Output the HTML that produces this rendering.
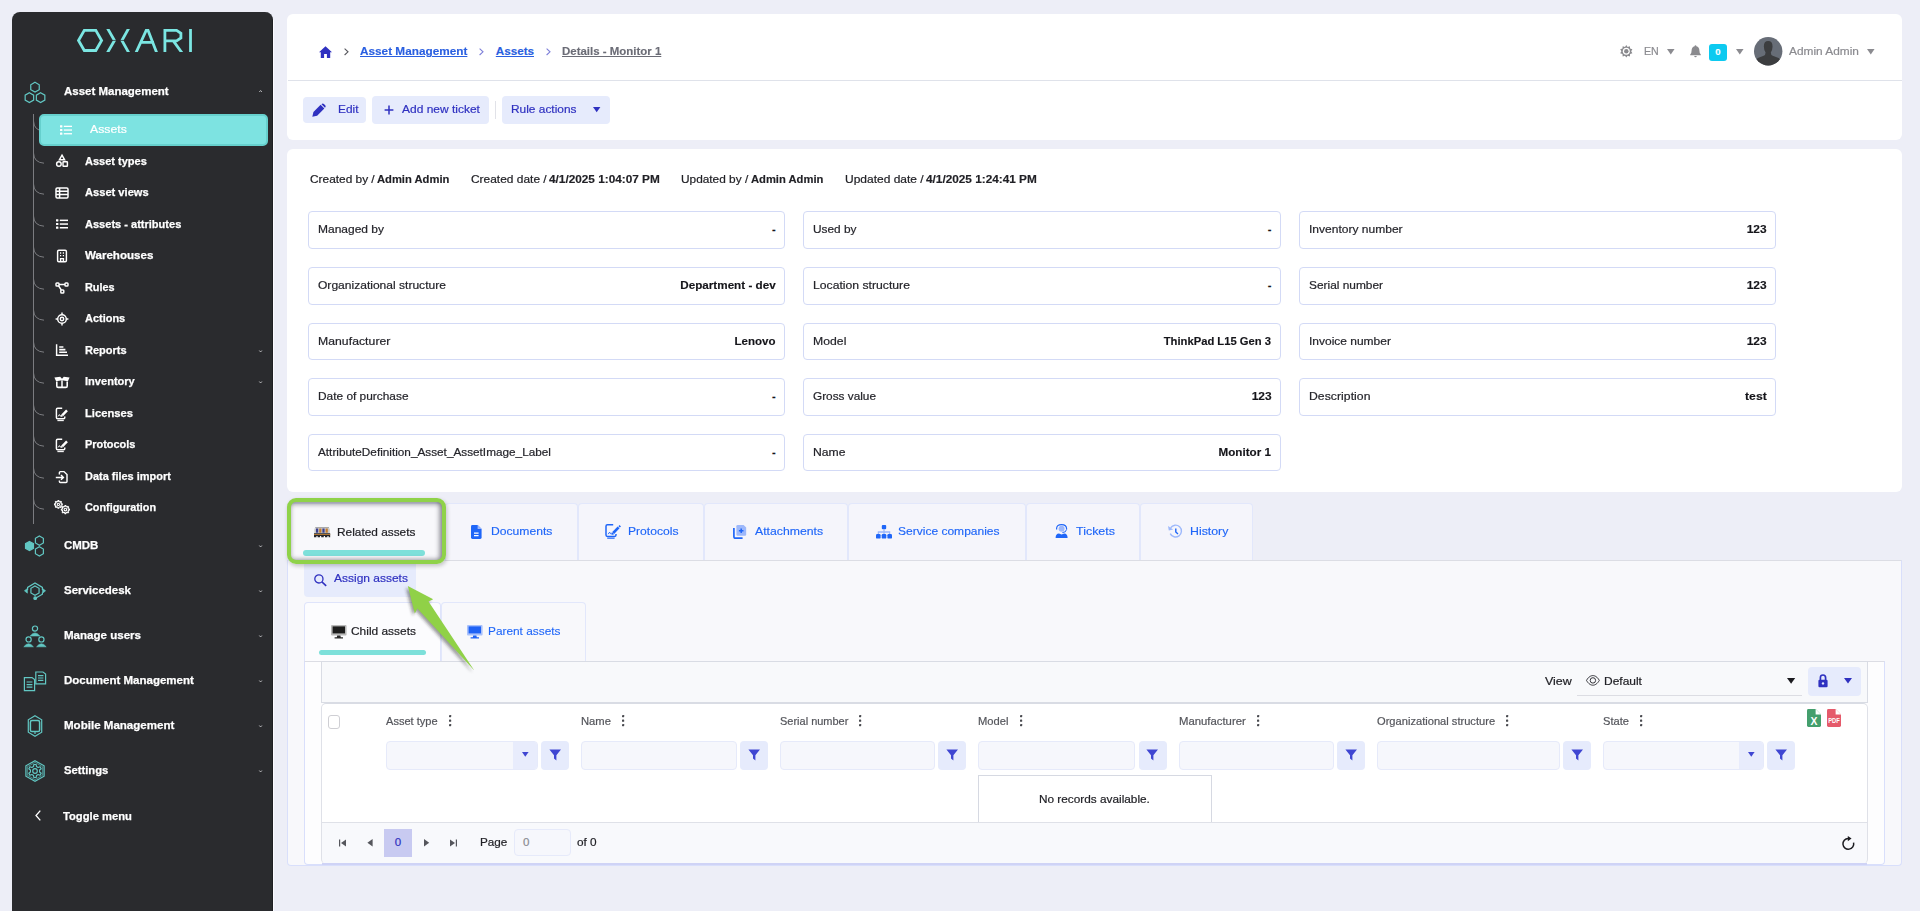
<!DOCTYPE html>
<html lang="en">
<head>
<meta charset="utf-8">
<title>Details - Monitor 1</title>
<style>
*{box-sizing:border-box;margin:0;padding:0}
html,body{width:1920px;height:911px;overflow:hidden}
body{background:#edeef7;font-family:"Liberation Sans",sans-serif;font-size:12px;color:#1f1f24;position:relative}
.abs{position:absolute}
svg{overflow:visible}
.t{position:absolute;white-space:nowrap;line-height:16px;height:16px;color:#212126}
.card{background:#fff;border-radius:6px}
.fld{border:1px solid #d3daf6;border-radius:4px;background:#fff}
.btn{background:#e6ebfc;border-radius:4px}
.tab{background:#f5f5fb;border:1px solid #e2e7fb;border-bottom:0;border-radius:4px 4px 0 0}
.fin{background:#f6f7fc;border:1px solid #e6eafa;border-radius:4px}
.fbt{background:#e6ebfc;border-radius:4px}
</style>
</head>
<body>

<!-- SIDEBAR -->
<div class="abs " style="left:273px;top:20px;width:1px;height:891px;background:#fbfbff"></div>
<div class="abs " style="left:12px;top:12px;width:261px;height:899px;background:#2a2b2e;border-radius:8px 8px 0 0;border-right:1px solid #1f2023"></div>
<svg class="abs" style="left:77px;top:28px;" width="117" height="25" viewBox="0 0 117 25" fill="none" stroke="#7be6e2" stroke-width="2.8"><defs><clipPath id="lgc"><rect x="-1" y="1" width="119" height="22.9"/></clipPath></defs><g clip-path="url(#lgc)"><polygon points="1.5,12.45 7.3,2.4 18.8,2.4 24.6,12.45 18.8,22.5 7.3,22.5"/>
<path d="M30.1 -0.4 L37.5 12.45 L30.1 25.3 M52.1 -0.4 L44.9 12.45 L52.1 25.3"/>
<path d="M58.4 26 L70.2 0.2 L80.2 26 M63 14.4 H77"/>
<path d="M87.9 25 V2.4 H99.6 L103.9 5.3 V10 L99.6 12.95 H87.9 M96.3 12.95 L105.4 25.4"/>
<path d="M113.5 0 V25"/><path d="M35 12.45 H40 M42.4 12.45 H47.4" stroke="#2a2b2e" stroke-width="0.7"/></g></svg>
<div class="abs " style="left:33px;top:114px;width:1px;height:410px;background:#7b7c80"></div>
<svg class="abs" style="left:33px;top:121.3px;" width="12" height="11" viewBox="0 0 12 11" fill="none" stroke="#7b7c80" stroke-width="1"><path d="M0.5 0 Q0.8 9.5 11 10.2"/></svg>
<svg class="abs" style="left:33px;top:152.5px;" width="12" height="11" viewBox="0 0 12 11" fill="none" stroke="#7b7c80" stroke-width="1"><path d="M0.5 0 Q0.8 9.5 11 10.2"/></svg>
<svg class="abs" style="left:33px;top:184px;" width="12" height="11" viewBox="0 0 12 11" fill="none" stroke="#7b7c80" stroke-width="1"><path d="M0.5 0 Q0.8 9.5 11 10.2"/></svg>
<svg class="abs" style="left:33px;top:215.5px;" width="12" height="11" viewBox="0 0 12 11" fill="none" stroke="#7b7c80" stroke-width="1"><path d="M0.5 0 Q0.8 9.5 11 10.2"/></svg>
<svg class="abs" style="left:33px;top:247px;" width="12" height="11" viewBox="0 0 12 11" fill="none" stroke="#7b7c80" stroke-width="1"><path d="M0.5 0 Q0.8 9.5 11 10.2"/></svg>
<svg class="abs" style="left:33px;top:278.5px;" width="12" height="11" viewBox="0 0 12 11" fill="none" stroke="#7b7c80" stroke-width="1"><path d="M0.5 0 Q0.8 9.5 11 10.2"/></svg>
<svg class="abs" style="left:33px;top:310px;" width="12" height="11" viewBox="0 0 12 11" fill="none" stroke="#7b7c80" stroke-width="1"><path d="M0.5 0 Q0.8 9.5 11 10.2"/></svg>
<svg class="abs" style="left:33px;top:341.5px;" width="12" height="11" viewBox="0 0 12 11" fill="none" stroke="#7b7c80" stroke-width="1"><path d="M0.5 0 Q0.8 9.5 11 10.2"/></svg>
<svg class="abs" style="left:33px;top:373px;" width="12" height="11" viewBox="0 0 12 11" fill="none" stroke="#7b7c80" stroke-width="1"><path d="M0.5 0 Q0.8 9.5 11 10.2"/></svg>
<svg class="abs" style="left:33px;top:404.5px;" width="12" height="11" viewBox="0 0 12 11" fill="none" stroke="#7b7c80" stroke-width="1"><path d="M0.5 0 Q0.8 9.5 11 10.2"/></svg>
<svg class="abs" style="left:33px;top:436px;" width="12" height="11" viewBox="0 0 12 11" fill="none" stroke="#7b7c80" stroke-width="1"><path d="M0.5 0 Q0.8 9.5 11 10.2"/></svg>
<svg class="abs" style="left:33px;top:467.5px;" width="12" height="11" viewBox="0 0 12 11" fill="none" stroke="#7b7c80" stroke-width="1"><path d="M0.5 0 Q0.8 9.5 11 10.2"/></svg>
<svg class="abs" style="left:33px;top:499px;" width="12" height="11" viewBox="0 0 12 11" fill="none" stroke="#7b7c80" stroke-width="1"><path d="M0.5 0 Q0.8 9.5 11 10.2"/></svg>
<div class="abs " style="left:39px;top:114px;width:229px;height:32px;background:#7de3e1;border:2px solid #66d0cd;border-radius:5px"></div>
<span class="t" style="top:121.36px;font-size:11.84px;left:89.70px;color:#fff;transform:scaleX(1.036);transform-origin:0 50%;-webkit-text-stroke:0.2px;">Assets</span>
<span class="t" style="top:152.62px;font-size:11.65px;left:85.00px;font-weight:bold;color:#fff;transform:scaleX(0.946);transform-origin:0 50%;-webkit-text-stroke:0.25px;">Asset types</span>
<span class="t" style="top:184.12px;font-size:11.65px;left:85.00px;font-weight:bold;color:#fff;transform:scaleX(0.955);transform-origin:0 50%;-webkit-text-stroke:0.25px;">Asset views</span>
<span class="t" style="top:215.62px;font-size:11.65px;left:85.00px;font-weight:bold;color:#fff;transform:scaleX(0.948);transform-origin:0 50%;-webkit-text-stroke:0.25px;">Assets - attributes</span>
<span class="t" style="top:247.12px;font-size:11.65px;left:85.00px;font-weight:bold;color:#fff;transform:scaleX(0.994);transform-origin:0 50%;-webkit-text-stroke:0.25px;">Warehouses</span>
<span class="t" style="top:278.62px;font-size:11.65px;left:85.00px;font-weight:bold;color:#fff;transform:scaleX(0.933);transform-origin:0 50%;-webkit-text-stroke:0.25px;">Rules</span>
<span class="t" style="top:310.12px;font-size:11.65px;left:85.00px;font-weight:bold;color:#fff;transform:scaleX(0.941);transform-origin:0 50%;-webkit-text-stroke:0.25px;">Actions</span>
<span class="t" style="top:341.62px;font-size:11.65px;left:85.00px;font-weight:bold;color:#fff;transform:scaleX(0.947);transform-origin:0 50%;-webkit-text-stroke:0.25px;">Reports</span>
<span class="t" style="top:373.12px;font-size:11.65px;left:85.00px;font-weight:bold;color:#fff;transform:scaleX(0.950);transform-origin:0 50%;-webkit-text-stroke:0.25px;">Inventory</span>
<span class="t" style="top:404.62px;font-size:11.65px;left:85.00px;font-weight:bold;color:#fff;transform:scaleX(0.965);transform-origin:0 50%;-webkit-text-stroke:0.25px;">Licenses</span>
<span class="t" style="top:436.12px;font-size:11.65px;left:85.00px;font-weight:bold;color:#fff;transform:scaleX(0.938);transform-origin:0 50%;-webkit-text-stroke:0.25px;">Protocols</span>
<span class="t" style="top:467.62px;font-size:11.65px;left:85.00px;font-weight:bold;color:#fff;transform:scaleX(0.941);transform-origin:0 50%;-webkit-text-stroke:0.25px;">Data files import</span>
<span class="t" style="top:499.12px;font-size:11.65px;left:85.00px;font-weight:bold;color:#fff;transform:scaleX(0.931);transform-origin:0 50%;-webkit-text-stroke:0.25px;">Configuration</span>
<span class="t" style="top:83.12px;font-size:11.65px;left:64.10px;font-weight:bold;color:#fff;transform:scaleX(0.986);transform-origin:0 50%;-webkit-text-stroke:0.25px;">Asset Management</span>
<span class="t" style="top:537.12px;font-size:11.65px;left:64.10px;font-weight:bold;color:#fff;transform:scaleX(0.984);transform-origin:0 50%;-webkit-text-stroke:0.25px;">CMDB</span>
<span class="t" style="top:582.12px;font-size:11.65px;left:64.10px;font-weight:bold;color:#fff;transform:scaleX(0.985);transform-origin:0 50%;-webkit-text-stroke:0.25px;">Servicedesk</span>
<span class="t" style="top:627.12px;font-size:11.65px;left:64.10px;font-weight:bold;color:#fff;transform:scaleX(0.992);transform-origin:0 50%;-webkit-text-stroke:0.25px;">Manage users</span>
<span class="t" style="top:672.12px;font-size:11.65px;left:64.10px;font-weight:bold;color:#fff;transform:scaleX(0.989);transform-origin:0 50%;-webkit-text-stroke:0.25px;">Document Management</span>
<span class="t" style="top:716.92px;font-size:11.65px;left:64.10px;font-weight:bold;color:#fff;transform:scaleX(0.992);transform-origin:0 50%;-webkit-text-stroke:0.25px;">Mobile Management</span>
<span class="t" style="top:762.12px;font-size:11.65px;left:64.10px;font-weight:bold;color:#fff;transform:scaleX(0.966);transform-origin:0 50%;-webkit-text-stroke:0.25px;">Settings</span>
<span class="t" style="top:807.82px;font-size:11.65px;left:62.60px;font-weight:bold;color:#fff;transform:scaleX(0.962);transform-origin:0 50%;-webkit-text-stroke:0.25px;">Toggle menu</span>
<svg class="abs" style="left:258.9px;top:90.3px;" width="3.2" height="2.5" viewBox="0 0 3.2 2.5" fill="none" stroke="#d8d8da" stroke-width="0.8"><path d="M0.3 2 L1.6 0.5 L2.9 2"/></svg>
<svg class="abs" style="left:259.1px;top:349.9px;" width="3.2" height="2.5" viewBox="0 0 3.2 2.5" fill="none" stroke="#d8d8da" stroke-width="0.8"><path d="M0.3 0.5 L1.6 2 L2.9 0.5"/></svg>
<svg class="abs" style="left:259.1px;top:381.4px;" width="3.2" height="2.5" viewBox="0 0 3.2 2.5" fill="none" stroke="#d8d8da" stroke-width="0.8"><path d="M0.3 0.5 L1.6 2 L2.9 0.5"/></svg>
<svg class="abs" style="left:259.1px;top:544.9px;" width="3.2" height="2.5" viewBox="0 0 3.2 2.5" fill="none" stroke="#d8d8da" stroke-width="0.8"><path d="M0.3 0.5 L1.6 2 L2.9 0.5"/></svg>
<svg class="abs" style="left:259.1px;top:589.9px;" width="3.2" height="2.5" viewBox="0 0 3.2 2.5" fill="none" stroke="#d8d8da" stroke-width="0.8"><path d="M0.3 0.5 L1.6 2 L2.9 0.5"/></svg>
<svg class="abs" style="left:259.1px;top:634.9px;" width="3.2" height="2.5" viewBox="0 0 3.2 2.5" fill="none" stroke="#d8d8da" stroke-width="0.8"><path d="M0.3 0.5 L1.6 2 L2.9 0.5"/></svg>
<svg class="abs" style="left:259.1px;top:679.9px;" width="3.2" height="2.5" viewBox="0 0 3.2 2.5" fill="none" stroke="#d8d8da" stroke-width="0.8"><path d="M0.3 0.5 L1.6 2 L2.9 0.5"/></svg>
<svg class="abs" style="left:259.1px;top:724.9px;" width="3.2" height="2.5" viewBox="0 0 3.2 2.5" fill="none" stroke="#d8d8da" stroke-width="0.8"><path d="M0.3 0.5 L1.6 2 L2.9 0.5"/></svg>
<svg class="abs" style="left:259.1px;top:769.9px;" width="3.2" height="2.5" viewBox="0 0 3.2 2.5" fill="none" stroke="#d8d8da" stroke-width="0.8"><path d="M0.3 0.5 L1.6 2 L2.9 0.5"/></svg>
<svg class="abs" style="left:34.5px;top:810px;" width="6" height="11" viewBox="0 0 6 11" fill="none" stroke="#fff" stroke-width="1.3"><path d="M5.3 0.6 L1 5.5 L5.3 10.4"/></svg>
<svg class="abs" style="left:59px;top:122.8px;" width="14" height="14" viewBox="0 0 14 14" fill="#fff"><rect x="1" y="2.2" width="2.4" height="2.2" rx=".4"/><rect x="1" y="5.9" width="2.4" height="2.2" rx=".4"/><rect x="1" y="9.6" width="2.4" height="2.2" rx=".4"/><rect x="4.8" y="2.7" width="8.2" height="1.3"/><rect x="4.8" y="6.4" width="8.2" height="1.3"/><rect x="4.8" y="10.1" width="8.2" height="1.3"/></svg>
<svg class="abs" style="left:54.5px;top:154.1px;" width="14" height="14" viewBox="0 0 14 14" fill="none" stroke="#fff" stroke-width="1.45"><path d="M7 1.2 L9.6 5.8 H4.4 Z"/><circle cx="3.9" cy="10" r="2.3"/><rect x="8" y="7.8" width="4.4" height="4.4" rx=".5"/></svg>
<svg class="abs" style="left:54.5px;top:185.8px;" width="14" height="14" viewBox="0 0 14 14" fill="none" stroke="#fff" stroke-width="1.5"><rect x="1" y="2" width="12" height="10" rx="1.2"/><path d="M1 5.3 H13 M1 8.6 H13 M4.6 2 V12" /></svg>
<svg class="abs" style="left:54.5px;top:217.1px;" width="14" height="14" viewBox="0 0 14 14" fill="#fff"><rect x="1" y="2.2" width="2.4" height="2.2" rx=".4"/><rect x="1" y="5.9" width="2.4" height="2.2" rx=".4"/><rect x="1" y="9.6" width="2.4" height="2.2" rx=".4"/><rect x="4.8" y="2.6" width="8.2" height="1.5"/><rect x="4.8" y="6.3" width="8.2" height="1.5"/><rect x="4.8" y="10" width="8.2" height="1.5"/></svg>
<svg class="abs" style="left:54.5px;top:249px;" width="14" height="14" viewBox="0 0 14 14" fill="none" stroke="#fff" stroke-width="1.45"><rect x="2.6" y="1.2" width="8.8" height="11.6" rx="1.2"/><path d="M5 4 H6.2 M7.8 4 H9 M5 6.6 H6.2 M7.8 6.6 H9" stroke-width="1.4"/><path d="M5.6 12.6 V9.6 H8.4 V12.6"/></svg>
<svg class="abs" style="left:54.5px;top:280.5px;" width="14" height="14" viewBox="0 0 14 14" fill="none" stroke="#fff" stroke-width="1.45"><rect x="1" y="2" width="3" height="3" rx=".8"/><rect x="10" y="2" width="3" height="3" rx=".8"/><rect x="5.8" y="9" width="3" height="3" rx=".8"/><path d="M4 3.5 H10 M3.6 4.8 L6.3 9"/></svg>
<svg class="abs" style="left:54.5px;top:312px;" width="14" height="14" viewBox="0 0 14 14" fill="none" stroke="#fff" stroke-width="1.45"><circle cx="7" cy="7" r="4.3"/><circle cx="7" cy="7" r="1.7"/><path d="M7 0.6 V2.7 M7 11.3 V13.4 M0.6 7 H2.7 M11.3 7 H13.4"/></svg>
<svg class="abs" style="left:54.5px;top:343.3px;" width="14" height="14" viewBox="0 0 14 14" fill="none" stroke="#fff" stroke-width="1.45"><path d="M1.6 1.2 V12.2 H13"/><path d="M4.2 4 H8.4 M4.2 6.6 H10.4 M4.2 9.2 H12" stroke-width="1.6"/></svg>
<svg class="abs" style="left:54.5px;top:375px;" width="14" height="14" viewBox="0 0 14 14" fill="none" stroke="#fff" stroke-width="1.45"><path d="M-0.6 2.6 L5.2 1.7 L7 3.7 L8.8 1.7 L14.6 2.6 L12.9 6.2 L7 5.2 L1.1 6.2 Z" fill="#fff" stroke="none"/><path d="M1.8 6.4 V11 Q1.8 12.4 3.2 12.4 H10.8 Q12.2 12.4 12.2 11 V6.4" stroke-width="1.6"/><path d="M7 5.2 V12" stroke-width="1.5"/></svg>
<svg class="abs" style="left:54.5px;top:406.5px;" width="14" height="14" viewBox="0 0 14 14" fill="none" stroke="#fff" stroke-width="1.45"><path d="M9.8 9.6 V10.6 Q9.8 11.8 8.6 11.8 H2.6 Q1.4 11.8 1.4 10.6 V2.4 Q1.4 1.2 2.6 1.2 H7.2"/><path d="M3.2 9.4 L4.4 7.6 L5.4 9 L6.2 8.4" stroke-width="1"/><path d="M7.2 8.4 L12 3.4" stroke-width="2.4"/><path d="M5.6 10 L6.4 7.6 L8 9.2 Z" fill="#fff" stroke="none"/><path d="M2.4 13.6 H8.8" stroke-width="1.1"/></svg>
<svg class="abs" style="left:54.5px;top:438px;" width="14" height="14" viewBox="0 0 14 14" fill="none" stroke="#fff" stroke-width="1.45"><path d="M9.8 9.6 V10.6 Q9.8 11.8 8.6 11.8 H2.6 Q1.4 11.8 1.4 10.6 V2.4 Q1.4 1.2 2.6 1.2 H7.2"/><path d="M3.2 9.4 L4.4 7.6 L5.4 9 L6.2 8.4" stroke-width="1"/><path d="M7.2 8.4 L12 3.4" stroke-width="2.4"/><path d="M5.6 10 L6.4 7.6 L8 9.2 Z" fill="#fff" stroke="none"/><path d="M2.4 13.6 H8.8" stroke-width="1.1"/></svg>
<svg class="abs" style="left:54.5px;top:469.5px;" width="14" height="14" viewBox="0 0 14 14" fill="none" stroke="#fff" stroke-width="1.45"><path d="M4.4 4.4 V2.6 Q4.4 1.6 5.4 1.6 H9 L12 4.6 V11.4 Q12 12.4 11 12.4 H5.4 Q4.4 12.4 4.4 11.4 V10.4"/><path d="M0.8 7.4 H8.2 M6 5 L8.4 7.4 L6 9.8"/></svg>
<svg class="abs" style="left:53.5px;top:500.4px;" width="16" height="14" viewBox="0 0 16 14" fill="none" stroke="#fff" stroke-width="1.1" stroke-linejoin="round"><path d="M3.77 1.57 L3.91 0.53 L4.89 0.53 L5.03 1.57 L5.95 1.95 L6.79 1.32 L7.48 2.01 L6.85 2.85 L7.23 3.77 L8.27 3.91 L8.27 4.89 L7.23 5.03 L6.85 5.95 L7.48 6.79 L6.79 7.48 L5.95 6.85 L5.03 7.23 L4.89 8.27 L3.91 8.27 L3.77 7.23 L2.85 6.85 L2.01 7.48 L1.32 6.79 L1.95 5.95 L1.57 5.03 L0.53 4.89 L0.53 3.91 L1.57 3.77 L1.95 2.85 L1.32 2.01 L2.01 1.32 L2.85 1.95 Z"/><circle cx="4.4" cy="4.4" r="1.1"/><path d="M10.72 6.57 L10.89 5.53 L11.91 5.53 L12.08 6.57 L13.06 6.98 L13.91 6.36 L14.64 7.09 L14.02 7.94 L14.43 8.92 L15.47 9.09 L15.47 10.11 L14.43 10.28 L14.02 11.26 L14.64 12.11 L13.91 12.84 L13.06 12.22 L12.08 12.63 L11.91 13.67 L10.89 13.67 L10.72 12.63 L9.74 12.22 L8.89 12.84 L8.16 12.11 L8.78 11.26 L8.37 10.28 L7.33 10.11 L7.33 9.09 L8.37 8.92 L8.78 7.94 L8.16 7.09 L8.89 6.36 L9.74 6.98 Z"/><circle cx="11.4" cy="9.6" r="1.3"/></svg>
<svg class="abs" style="left:23px;top:80.8px;" width="24" height="24" viewBox="0 0 24 24" fill="none" stroke="#62c7c3" stroke-width="1.2"><polygon points="12.00,1.30 16.24,3.75 16.24,8.65 12.00,11.10 7.76,8.65 7.76,3.75"/><polygon points="6.40,11.70 10.64,14.15 10.64,19.05 6.40,21.50 2.16,19.05 2.16,14.15"/><polygon points="17.60,11.70 21.84,14.15 21.84,19.05 17.60,21.50 13.36,19.05 13.36,14.15"/></svg>
<svg class="abs" style="left:23px;top:534px;" width="24" height="24" viewBox="0 0 24 24" fill="none" stroke="#62c7c3" stroke-width="1.2"><polygon points="6.50,7.40 10.48,9.70 10.48,14.30 6.50,16.60 2.52,14.30 2.52,9.70" fill="#62c7c3"/><polygon points="16.40,2.00 20.38,4.30 20.38,8.90 16.40,11.20 12.42,8.90 12.42,4.30"/><polygon points="16.40,12.80 20.38,15.10 20.38,19.70 16.40,22.00 12.42,19.70 12.42,15.10"/></svg>
<svg class="abs" style="left:23px;top:579px;" width="24" height="24" viewBox="0 0 24 24" fill="none" stroke="#62c7c3" stroke-width="1.2"><polygon points="12.00,6.90 16.07,9.25 16.07,13.95 12.00,16.30 7.93,13.95 7.93,9.25"/><path d="M4.6 11 V8.4 L12 4 L19.4 8.4 V11"/><path d="M1.4 11.8 L4.4 9.4 V14.2 Z M22.6 11.8 L19.6 9.4 V14.2 Z" fill="#62c7c3" stroke-width=".6"/><path d="M19.4 13.6 V15.2 L13.4 18.8"/><circle cx="12.2" cy="19.2" r="1.3" fill="#62c7c3"/></svg>
<svg class="abs" style="left:23px;top:624px;" width="24" height="24" viewBox="0 0 24 24" fill="none" stroke="#62c7c3" stroke-width="1.2"><circle cx="12" cy="4.6" r="2.6"/><path d="M7.2 12 Q12 5.8 16.8 12 Z" fill="#62c7c3" stroke-width=".6"/><circle cx="5.6" cy="15.4" r="2.6"/><path d="M0.8 22.8 Q5.6 16.6 10.4 22.8 Z" fill="#62c7c3" stroke-width=".6"/><circle cx="18.4" cy="15.4" r="2.6"/><path d="M13.6 22.8 Q18.4 16.6 23.2 22.8 Z" fill="#62c7c3" stroke-width=".6"/></svg>
<svg class="abs" style="left:23px;top:669px;" width="24" height="24" viewBox="0 0 24 24" fill="none" stroke="#62c7c3" stroke-width="1.2"><path d="M1.4 8.6 H9 L11.6 10.6 V21.6 H1.4 Z"/><path d="M3.6 13 H9.4 M3.6 15.6 H9.4 M3.6 18.2 H9.4"/><path d="M12.8 3 H20 L22.6 5 V14.8 H12.8 Z"/><path d="M15 6.6 H20.4 M15 9 H20.4 M15 11.4 H20.4"/></svg>
<svg class="abs" style="left:23px;top:714px;" width="24" height="24" viewBox="0 0 24 24" fill="none" stroke="#62c7c3" stroke-width="1.2"><polygon points="12,1.8 18.7,5.8 18.7,18.2 12,22.2 5.3,18.2 5.3,5.8"/><rect x="7.4" y="6.6" width="9.2" height="11" rx="1.6" stroke-width="1.5"/><path d="M12 17.6 V20"/></svg>
<svg class="abs" style="left:23px;top:759px;" width="24" height="24" viewBox="0 0 24 24" fill="none" stroke="#62c7c3" stroke-width="1.2"><polygon points="12,1.7 21.1,6.85 21.1,17.15 12,22.3 2.9,17.15 2.9,6.85"/><polygon points="12,3.4 19.6,7.7 19.6,16.3 12,20.6 4.4,16.3 4.4,7.7" stroke-width=".6"/><path d="M10.55 7.53 L10.83 5.50 L13.17 5.50 L13.45 7.53 L15.14 8.51 L17.04 7.74 L18.21 9.76 L16.60 11.02 L16.60 12.98 L18.21 14.24 L17.04 16.26 L15.14 15.49 L13.45 16.47 L13.17 18.50 L10.83 18.50 L10.55 16.47 L8.86 15.49 L6.96 16.26 L5.79 14.24 L7.40 12.98 L7.40 11.02 L5.79 9.76 L6.96 7.74 L8.86 8.51 Z" stroke-linejoin="round" stroke-width="1.2"/><circle cx="12" cy="12" r="2.3" stroke-width="1.2"/></svg>
<!-- TOP CARD -->
<div class="abs card" style="left:287px;top:13.8px;width:1615.3px;height:126.2px;"></div>
<div class="abs " style="left:288px;top:80px;width:1614px;height:1px;background:#dfe2ea"></div>
<svg class="abs" style="left:319px;top:46px;" width="13" height="12" viewBox="0 0 13 12" fill="#2f31c0"><path d="M6.5 0.3 L13 6.2 H11.2 V12 H7.9 V8 H5.1 V12 H1.8 V6.2 H0 Z"/></svg>
<svg class="abs" style="left:343.8px;top:48px;" width="5" height="8" viewBox="0 0 5 8" fill="none" stroke="#55565c" stroke-width="1.1"><path d="M0.6 0.6 L4 3.8 L0.6 7"/></svg>
<span class="t" style="top:43.12px;font-size:11.65px;left:360.30px;font-weight:bold;color:#2a5fe0;transform:scaleX(1.012);transform-origin:0 50%;-webkit-text-stroke:0.15px;text-decoration:underline;">Asset Management</span>
<svg class="abs" style="left:479.3px;top:48px;" width="5" height="8" viewBox="0 0 5 8" fill="none" stroke="#7d7fd8" stroke-width="1.1"><path d="M0.6 0.6 L4 3.8 L0.6 7"/></svg>
<span class="t" style="top:43.12px;font-size:11.65px;left:495.80px;font-weight:bold;color:#2a5fe0;-webkit-text-stroke:0.15px;text-decoration:underline;">Assets</span>
<svg class="abs" style="left:546.3px;top:48px;" width="5" height="8" viewBox="0 0 5 8" fill="none" stroke="#7d7fd8" stroke-width="1.1"><path d="M0.6 0.6 L4 3.8 L0.6 7"/></svg>
<span class="t" style="top:43.12px;font-size:11.65px;left:562.00px;font-weight:bold;color:#6b6c76;transform:scaleX(0.984);transform-origin:0 50%;-webkit-text-stroke:0.15px;text-decoration:underline;">Details - Monitor 1</span>
<svg class="abs" style="left:1620px;top:45.2px;" width="12.6" height="12.6" viewBox="0 0 12.6 12.6" ><path d="M6.3 0 L7.6 1.9 L9.9 1.2 L10.1 3.6 L12.4 4.3 L11.2 6.3 L12.4 8.3 L10.1 9 L9.9 11.4 L7.6 10.7 L6.3 12.6 L5 10.7 L2.7 11.4 L2.5 9 L0.2 8.3 L1.4 6.3 L0.2 4.3 L2.5 3.6 L2.7 1.2 L5 1.9 Z" fill="#8a8a8e"/><circle cx="6.3" cy="6.3" r="3.5" fill="#fff"/><circle cx="6.3" cy="6.3" r="2.2" fill="#8a8a8e"/></svg>
<span class="t" style="top:42.88px;font-size:10.92px;left:1643.90px;color:#8b8b90;transform:scaleX(0.976);transform-origin:0 50%;-webkit-text-stroke:0.2px;">EN</span>
<svg class="abs" style="left:1667.4px;top:49.3px;" width="7.6" height="5.4" viewBox="0 0 7.6 5.4" fill="#8b8b90"><path d="M0 0 H7.6 L3.8 5.4 Z"/></svg>
<svg class="abs" style="left:1690.4px;top:45.2px;" width="11" height="12.4" viewBox="0 0 11 12.4" fill="#8a8a8e"><path d="M5.5 0.2 Q6.4 0.2 6.4 1.2 Q9.4 2 9.4 5.4 Q9.4 8.4 10.8 9.4 V10.2 H0.2 V9.4 Q1.6 8.4 1.6 5.4 Q1.6 2 4.6 1.2 Q4.6 0.2 5.5 0.2 Z M4.2 11 H6.8 Q6.6 12.2 5.5 12.2 Q4.4 12.2 4.2 11 Z"/></svg>
<div class="abs " style="left:1709px;top:44px;width:18px;height:17px;background:#0dcaf0;border-radius:3px"></div>
<span class="t" style="top:43.76px;font-size:9.53px;left:1715.35px;font-weight:bold;color:#fff;-webkit-text-stroke:0.15px;">0</span>
<svg class="abs" style="left:1736px;top:49.3px;" width="7.6" height="5.4" viewBox="0 0 7.6 5.4" fill="#8b8b90"><path d="M0 0 H7.6 L3.8 5.4 Z"/></svg>
<svg class="abs" style="left:1753.8px;top:37.1px;" width="28.4" height="28.4" viewBox="0 0 29.4 29.4" ><defs><clipPath id="avc"><circle cx="14.7" cy="14.7" r="14.7"/></clipPath></defs><circle cx="14.7" cy="14.7" r="14.7" fill="#676d77"/><g clip-path="url(#avc)"><path d="M14.7 4.2 Q19.4 4.2 19.2 10.2 Q19 14.4 17.4 16 Q17.4 18.6 19.4 19.4 L25.4 21.8 Q27.6 22.8 27.6 26 V30 H1.8 V26 Q1.8 22.8 4 21.8 L10 19.4 Q12 18.6 12 16 Q10.4 14.4 10.2 10.2 Q10 4.2 14.7 4.2 Z" fill="#3c3d3f"/></g></svg>
<span class="t" style="top:42.88px;font-size:10.92px;left:1788.50px;color:#8b8b90;transform:scaleX(1.088);transform-origin:0 50%;-webkit-text-stroke:0.2px;">Admin Admin</span>
<svg class="abs" style="left:1867.4px;top:49.3px;" width="7.6" height="5.4" viewBox="0 0 7.6 5.4" fill="#8b8b90"><path d="M0 0 H7.6 L3.8 5.4 Z"/></svg>
<div class="abs btn" style="left:303px;top:97px;width:63px;height:26px;"></div>
<svg class="abs" style="left:311.6px;top:102.6px;" width="14.2" height="14.2" viewBox="0 0 13 13" fill="#2f31c0"><path d="M0.3 12.7 L1.3 8.3 L7.9 1.7 L11.3 5.1 L4.7 11.7 Z M8.9 0.9 Q9.9 -0.1 10.9 0.9 L12.1 2.1 Q13.1 3.1 12.1 4.1 L11.9 4.3 L8.7 1.1 Z"/></svg>
<span class="t" style="top:100.75px;font-size:11.56px;left:337.50px;color:#2f31c0;transform:scaleX(1.029);transform-origin:0 50%;-webkit-text-stroke:0.2px;">Edit</span>
<div class="abs btn" style="left:372px;top:96px;width:117px;height:28px;"></div>
<svg class="abs" style="left:384px;top:105px;" width="10" height="10" viewBox="0 0 10 10" fill="none" stroke="#2f31c0" stroke-width="1.5"><path d="M5 0.6 V9.4 M0.6 5 H9.4"/></svg>
<span class="t" style="top:100.75px;font-size:11.56px;left:402.00px;color:#2f31c0;transform:scaleX(1.038);transform-origin:0 50%;-webkit-text-stroke:0.2px;">Add new ticket</span>
<div class="abs " style="left:495px;top:101px;width:1px;height:18px;background:#e1e2e8"></div>
<div class="abs btn" style="left:502px;top:96px;width:108px;height:28px;"></div>
<span class="t" style="top:100.75px;font-size:11.56px;left:511.00px;color:#2f31c0;transform:scaleX(1.030);transform-origin:0 50%;-webkit-text-stroke:0.2px;">Rule actions</span>
<svg class="abs" style="left:593.3px;top:106.9px;" width="7.4" height="5.2" viewBox="0 0 7.4 5.2" fill="#2f31c0"><path d="M0 0 H7.4 L3.7 5.2 Z"/></svg>
<!-- DETAILS CARD -->
<div class="abs card" style="left:287px;top:148.8px;width:1615.3px;height:343.2px;"></div>
<span class="t" style="top:171.31px;font-size:11.1px;left:309.50px;transform:scaleX(1.070);transform-origin:0 50%;-webkit-text-stroke:0.2px;">Created by / </span>
<span class="t" style="top:171.31px;font-size:11.1px;left:376.80px;font-weight:bold;transform:scaleX(1.009);transform-origin:0 50%;-webkit-text-stroke:0.15px;">Admin Admin</span>
<span class="t" style="top:171.31px;font-size:11.1px;left:470.50px;transform:scaleX(1.076);transform-origin:0 50%;-webkit-text-stroke:0.2px;">Created date / </span>
<span class="t" style="top:171.31px;font-size:11.1px;left:548.80px;font-weight:bold;transform:scaleX(1.063);transform-origin:0 50%;-webkit-text-stroke:0.15px;">4/1/2025 1:04:07 PM</span>
<span class="t" style="top:171.31px;font-size:11.1px;left:681.00px;transform:scaleX(1.068);transform-origin:0 50%;-webkit-text-stroke:0.2px;">Updated by / </span>
<span class="t" style="top:171.31px;font-size:11.1px;left:750.80px;font-weight:bold;transform:scaleX(1.009);transform-origin:0 50%;-webkit-text-stroke:0.15px;">Admin Admin</span>
<span class="t" style="top:171.31px;font-size:11.1px;left:844.50px;transform:scaleX(1.080);transform-origin:0 50%;-webkit-text-stroke:0.2px;">Updated date / </span>
<span class="t" style="top:171.31px;font-size:11.1px;left:925.80px;font-weight:bold;transform:scaleX(1.063);transform-origin:0 50%;-webkit-text-stroke:0.15px;">4/1/2025 1:24:41 PM</span>
<div class="abs fld" style="left:308px;top:211px;width:477px;height:38px;"></div>
<span class="t" style="top:221.31px;font-size:11.1px;left:317.80px;color:#25252b;transform:scaleX(1.080);transform-origin:0 50%;-webkit-text-stroke:0.2px;">Managed by</span>
<span class="t" style="top:221.31px;font-size:11.1px;right:1144.30px;font-weight:bold;color:#15151a;-webkit-text-stroke:0.15px;">-</span>
<div class="abs fld" style="left:803px;top:211px;width:478px;height:38px;"></div>
<span class="t" style="top:221.31px;font-size:11.1px;left:812.80px;color:#25252b;transform:scaleX(1.068);transform-origin:0 50%;-webkit-text-stroke:0.2px;">Used by</span>
<span class="t" style="top:221.31px;font-size:11.1px;right:648.60px;font-weight:bold;color:#15151a;-webkit-text-stroke:0.15px;">-</span>
<div class="abs fld" style="left:1299px;top:211px;width:477px;height:38px;"></div>
<span class="t" style="top:221.31px;font-size:11.1px;left:1308.50px;color:#25252b;transform:scaleX(1.084);transform-origin:0 50%;-webkit-text-stroke:0.2px;">Inventory number</span>
<span class="t" style="top:221.31px;font-size:11.1px;right:153.50px;font-weight:bold;color:#15151a;transform:scaleX(1.074);transform-origin:100% 50%;-webkit-text-stroke:0.15px;">123</span>
<div class="abs fld" style="left:308px;top:267px;width:477px;height:38px;"></div>
<span class="t" style="top:277.31px;font-size:11.1px;left:317.80px;color:#25252b;transform:scaleX(1.086);transform-origin:0 50%;-webkit-text-stroke:0.2px;">Organizational structure</span>
<span class="t" style="top:277.31px;font-size:11.1px;right:1144.30px;font-weight:bold;color:#15151a;transform:scaleX(1.052);transform-origin:100% 50%;-webkit-text-stroke:0.15px;">Department - dev</span>
<div class="abs fld" style="left:803px;top:267px;width:478px;height:38px;"></div>
<span class="t" style="top:277.31px;font-size:11.1px;left:812.80px;color:#25252b;transform:scaleX(1.099);transform-origin:0 50%;-webkit-text-stroke:0.2px;">Location structure</span>
<span class="t" style="top:277.31px;font-size:11.1px;right:648.60px;font-weight:bold;color:#15151a;-webkit-text-stroke:0.15px;">-</span>
<div class="abs fld" style="left:1299px;top:267px;width:477px;height:38px;"></div>
<span class="t" style="top:277.31px;font-size:11.1px;left:1308.50px;color:#25252b;transform:scaleX(1.071);transform-origin:0 50%;-webkit-text-stroke:0.2px;">Serial number</span>
<span class="t" style="top:277.31px;font-size:11.1px;right:153.50px;font-weight:bold;color:#15151a;transform:scaleX(1.074);transform-origin:100% 50%;-webkit-text-stroke:0.15px;">123</span>
<div class="abs fld" style="left:308px;top:323px;width:477px;height:37px;"></div>
<span class="t" style="top:333.21px;font-size:11.1px;left:317.80px;color:#25252b;letter-spacing:0.04px;transform:scaleX(1.100);transform-origin:0 50%;-webkit-text-stroke:0.2px;">Manufacturer</span>
<span class="t" style="top:333.21px;font-size:11.1px;right:1144.30px;font-weight:bold;color:#15151a;transform:scaleX(1.036);transform-origin:100% 50%;-webkit-text-stroke:0.15px;">Lenovo</span>
<div class="abs fld" style="left:803px;top:323px;width:478px;height:37px;"></div>
<span class="t" style="top:333.21px;font-size:11.1px;left:812.80px;color:#25252b;letter-spacing:0.04px;transform:scaleX(1.100);transform-origin:0 50%;-webkit-text-stroke:0.2px;">Model</span>
<span class="t" style="top:333.21px;font-size:11.1px;right:648.60px;font-weight:bold;color:#15151a;transform:scaleX(1.012);transform-origin:100% 50%;-webkit-text-stroke:0.15px;">ThinkPad L15 Gen 3</span>
<div class="abs fld" style="left:1299px;top:323px;width:477px;height:37px;"></div>
<span class="t" style="top:333.21px;font-size:11.1px;left:1308.50px;color:#25252b;transform:scaleX(1.080);transform-origin:0 50%;-webkit-text-stroke:0.2px;">Invoice number</span>
<span class="t" style="top:333.21px;font-size:11.1px;right:153.50px;font-weight:bold;color:#15151a;transform:scaleX(1.074);transform-origin:100% 50%;-webkit-text-stroke:0.15px;">123</span>
<div class="abs fld" style="left:308px;top:378px;width:477px;height:38px;"></div>
<span class="t" style="top:388.41px;font-size:11.1px;left:317.80px;color:#25252b;transform:scaleX(1.071);transform-origin:0 50%;-webkit-text-stroke:0.2px;">Date of purchase</span>
<span class="t" style="top:388.41px;font-size:11.1px;right:1144.30px;font-weight:bold;color:#15151a;-webkit-text-stroke:0.15px;">-</span>
<div class="abs fld" style="left:803px;top:378px;width:478px;height:38px;"></div>
<span class="t" style="top:388.41px;font-size:11.1px;left:812.80px;color:#25252b;transform:scaleX(1.064);transform-origin:0 50%;-webkit-text-stroke:0.2px;">Gross value</span>
<span class="t" style="top:388.41px;font-size:11.1px;right:648.60px;font-weight:bold;color:#15151a;transform:scaleX(1.074);transform-origin:100% 50%;-webkit-text-stroke:0.15px;">123</span>
<div class="abs fld" style="left:1299px;top:378px;width:477px;height:38px;"></div>
<span class="t" style="top:388.41px;font-size:11.1px;left:1308.50px;color:#25252b;letter-spacing:0.04px;transform:scaleX(1.100);transform-origin:0 50%;-webkit-text-stroke:0.2px;">Description</span>
<span class="t" style="top:388.41px;font-size:11.1px;right:153.45px;font-weight:bold;color:#15151a;letter-spacing:0.04px;transform:scaleX(1.100);transform-origin:100% 50%;-webkit-text-stroke:0.15px;">test</span>
<div class="abs fld" style="left:308px;top:434px;width:477px;height:37px;"></div>
<span class="t" style="top:444.31px;font-size:11.1px;left:317.80px;color:#25252b;transform:scaleX(1.061);transform-origin:0 50%;-webkit-text-stroke:0.2px;">AttributeDefinition_Asset_AssetImage_Label</span>
<span class="t" style="top:444.31px;font-size:11.1px;right:1144.30px;font-weight:bold;color:#15151a;-webkit-text-stroke:0.15px;">-</span>
<div class="abs fld" style="left:803px;top:434px;width:478px;height:37px;"></div>
<span class="t" style="top:444.31px;font-size:11.1px;left:812.80px;color:#25252b;transform:scaleX(1.098);transform-origin:0 50%;-webkit-text-stroke:0.2px;">Name</span>
<span class="t" style="top:444.31px;font-size:11.1px;right:648.60px;font-weight:bold;color:#15151a;transform:scaleX(1.049);transform-origin:100% 50%;-webkit-text-stroke:0.15px;">Monitor 1</span>
<!-- TABS -->
<div class="abs " style="left:287px;top:560px;width:1615px;height:306px;background:#f8f8fb;border:1px solid #d9dffb;border-top:1px solid #dcdde4;border-radius:0 0 4px 4px"></div>
<div class="abs tab" style="left:445px;top:503px;width:133px;height:57px;"></div>
<span class="t" style="top:523.15px;font-size:11.56px;left:491.00px;color:#1f66f8;transform:scaleX(1.052);transform-origin:0 50%;-webkit-text-stroke:0.15px;">Documents</span>
<div class="abs tab" style="left:578px;top:503px;width:126px;height:57px;"></div>
<span class="t" style="top:523.15px;font-size:11.56px;left:628.20px;color:#1f66f8;transform:scaleX(1.048);transform-origin:0 50%;-webkit-text-stroke:0.15px;">Protocols</span>
<div class="abs tab" style="left:704px;top:503px;width:143.6px;height:57px;"></div>
<span class="t" style="top:523.15px;font-size:11.56px;left:754.70px;color:#1f66f8;transform:scaleX(1.061);transform-origin:0 50%;-webkit-text-stroke:0.15px;">Attachments</span>
<div class="abs tab" style="left:847.6px;top:503px;width:178.4px;height:57px;"></div>
<span class="t" style="top:523.15px;font-size:11.56px;left:898.20px;color:#1f66f8;transform:scaleX(1.041);transform-origin:0 50%;-webkit-text-stroke:0.15px;">Service companies</span>
<div class="abs tab" style="left:1026px;top:503px;width:114px;height:57px;"></div>
<span class="t" style="top:523.15px;font-size:11.56px;left:1075.50px;color:#1f66f8;transform:scaleX(1.078);transform-origin:0 50%;-webkit-text-stroke:0.15px;">Tickets</span>
<div class="abs tab" style="left:1140px;top:503px;width:113px;height:57px;"></div>
<span class="t" style="top:523.15px;font-size:11.56px;left:1190.10px;color:#1f66f8;transform:scaleX(1.068);transform-origin:0 50%;-webkit-text-stroke:0.15px;">History</span>
<div class="abs " style="left:288px;top:503px;width:157px;height:57.5px;background:#f8f8fb;border:1px solid #e2e7fb;border-bottom:0;border-radius:4px 4px 0 0"></div>
<span class="t" style="top:524.15px;font-size:11.56px;left:336.70px;color:#212126;transform:scaleX(1.027);transform-origin:0 50%;-webkit-text-stroke:0.2px;">Related assets</span>
<div class="abs " style="left:303px;top:550px;width:122px;height:6px;background:#7de0da;border-radius:3px"></div>
<svg class="abs" style="left:314px;top:526.8px;" width="16.2" height="10.2" viewBox="0 0 16.2 10.2" ><rect x="1.2" y="0" width="13.8" height="1.5" fill="#a9a9a9"/><rect x="0.4" y="1.5" width="15.4" height="5" fill="#c9c9c9"/><rect x="2" y="1.5" width="2.2" height="4.2" fill="#3a3f8f"/><rect x="5.2" y="1.5" width="2.2" height="4.2" fill="#c47a2a"/><rect x="8.4" y="1.5" width="2.2" height="4.2" fill="#3a3f8f"/><rect x="11.6" y="1.5" width="2.2" height="4.2" fill="#c47a2a"/><path d="M0 6.2 H16.2 V10.2 H14.6 V9 H13.4 V10.2 H11 V9 H9.8 V10.2 H7.2 V9 H6 V10.2 H3.6 V9 H2.4 V10.2 H0 Z" fill="#26262a"/><rect x="0" y="7.2" width="16.2" height="0.8" fill="#d08a3a"/></svg>
<svg class="abs" style="left:471px;top:525px;" width="10.6" height="14" viewBox="0 0 10.6 14" ><path d="M1.4 0 H6.6 L10.6 4 V12.6 Q10.6 14 9.2 14 H1.4 Q0 14 0 12.6 V1.4 Q0 0 1.4 0 Z" fill="#1f66f8"/><path d="M6.6 0 V4 H10.6 Z" fill="#9db8fb"/><path d="M3 8.2 H7.6 M3 10.6 H7.6" stroke="#fff" stroke-width="1.2"/></svg>
<svg class="abs" style="left:605px;top:524.4px;" width="16" height="14.6" viewBox="0 0 16 14.6" ><path d="M11 10 V11 Q11 12.4 9.6 12.4 H2.4 Q1 12.4 1 11 V2.2 Q1 0.8 2.4 0.8 H8.2" fill="none" stroke="#1f66f8" stroke-width="1.5"/><path d="M3.2 10.2 L4.6 8.2 L5.8 9.8 L6.8 9" fill="none" stroke="#1f66f8" stroke-width="1"/><path d="M8.2 9 L13.6 3.4" stroke="#1f66f8" stroke-width="2.6"/><path d="M6.4 11 L7.2 8.2 L9.2 10.2 Z" fill="#1f66f8"/><path d="M14 1.6 L15.4 3" stroke="#1f66f8" stroke-width="1.6"/><path d="M2.2 14.2 H9.6" stroke="#1f66f8" stroke-width="1.1"/></svg>
<svg class="abs" style="left:733px;top:524.8px;" width="13.2" height="14" viewBox="0 0 13.2 14" ><path d="M0.9 3 V11.4 Q0.9 13.1 2.6 13.1 H9.6" fill="none" stroke="#1f66f8" stroke-width="1.7"/><path d="M4.6 0 H10.6 L13.2 2.6 V9.6 Q13.2 10.8 12 10.8 H4.6 Q3.4 10.8 3.4 9.6 V1.2 Q3.4 0 4.6 0 Z" fill="#9db8fb"/><path d="M8.2 3.4 V8 M5.9 5.7 H10.5" stroke="#1f66f8" stroke-width="1.5"/></svg>
<svg class="abs" style="left:875.6px;top:524.6px;" width="16" height="13.6" viewBox="0 0 16 13.6" ><rect x="5.8" y="0" width="4.4" height="4.2" rx="1" fill="#1f66f8"/><path d="M8 4 V7 M2.4 9.4 V7 H13.6 V9.4 M8 7 V9.4" fill="none" stroke="#9db8fb" stroke-width="1.3"/><rect x="0" y="9" width="4.6" height="4.6" rx="1.2" fill="#1f66f8"/><rect x="5.7" y="9" width="4.6" height="4.6" rx="1.2" fill="#1f66f8"/><rect x="11.4" y="9" width="4.6" height="4.6" rx="1.2" fill="#1f66f8"/></svg>
<svg class="abs" style="left:1054.7px;top:524.4px;" width="13.2" height="14" viewBox="0 0 13.2 14" ><circle cx="6.6" cy="4.8" r="3" fill="#9db8fb"/><path d="M1.6 5.6 V4.8 Q1.6 0.6 6.6 0.6 Q11.6 0.6 11.6 4.8 V5.6" fill="none" stroke="#1f66f8" stroke-width="1.2"/><path d="M11.4 5.6 Q11.4 8.4 7.4 8.6" fill="none" stroke="#1f66f8" stroke-width="1"/><path d="M0.6 14 Q0.6 9.8 4 9.6 L6.6 10.6 L9.2 9.6 Q12.6 9.8 12.6 14 Z" fill="#1f66f8"/></svg>
<svg class="abs" style="left:1168px;top:524.6px;" width="14.6" height="13.4" viewBox="0 0 14.6 13.4" ><path d="M2.6 2.8 A5.9 5.9 0 1 1 2.2 8.6" fill="none" stroke="#9db8fb" stroke-width="1.4"/><path d="M0 1 L0.8 5.6 L5.2 4.4 Z" fill="#9db8fb"/><path d="M7.8 3.4 V7 L10 9" fill="none" stroke="#1f66f8" stroke-width="1.4"/></svg>
<div class="abs btn" style="left:304px;top:560px;width:112px;height:37px;"></div>
<svg class="abs" style="left:313.7px;top:573.6px;" width="13" height="12.4" viewBox="0 0 13 12.4" ><circle cx="4.9" cy="4.9" r="4.1" fill="none" stroke="#2f31c0" stroke-width="1.3"/><path d="M7.9 7.9 L12.2 11.8" stroke="#2f31c0" stroke-width="1.6"/></svg>
<span class="t" style="top:570.15px;font-size:11.56px;left:333.50px;color:#2f31c0;transform:scaleX(1.038);transform-origin:0 50%;-webkit-text-stroke:0.2px;">Assign assets</span>
<div class="abs " style="left:441px;top:602px;width:145px;height:59px;background:#f8f8fb;border:1px solid #e2e7fb;border-bottom:0;border-radius:4px 4px 0 0"></div>
<div class="abs " style="left:304px;top:602px;width:137px;height:59px;background:#fcfcfe;border:1px solid #dfe4fb;border-bottom:0;border-radius:4px 4px 0 0"></div>
<svg class="abs" style="left:330.5px;top:625px;" width="15.6" height="13.6" viewBox="0 0 15.6 13.6" ><rect x="0" y="0" width="15.6" height="10.4" rx="1" fill="#b9b9b9"/><rect x="1.6" y="1.4" width="12.4" height="7" fill="#1d1d1d"/><path d="M6.2 10.4 H9.4 L9.8 12.2 H12 V13.6 H3.6 V12.2 H5.8 Z" fill="#2a2a2a"/></svg>
<span class="t" style="top:623.15px;font-size:11.56px;left:350.50px;color:#212126;transform:scaleX(1.032);transform-origin:0 50%;-webkit-text-stroke:0.2px;">Child assets</span>
<div class="abs " style="left:319px;top:650px;width:107px;height:5.4px;background:#7de0da;border-radius:3px"></div>
<svg class="abs" style="left:467.2px;top:625px;" width="15.6" height="13.6" viewBox="0 0 15.6 13.6" ><rect x="0" y="0" width="15.6" height="10.4" rx="1" fill="#a9c1fb"/><rect x="1.6" y="1.4" width="12.4" height="7" fill="#1f62f5"/><path d="M6.2 10.4 H9.4 L9.8 12.2 H12 V13.6 H3.6 V12.2 H5.8 Z" fill="#1f62f5"/></svg>
<span class="t" style="top:623.15px;font-size:11.56px;left:487.50px;color:#1f66f8;transform:scaleX(1.026);transform-origin:0 50%;-webkit-text-stroke:0.1px;">Parent assets</span>
<div class="abs " style="left:304px;top:660.5px;width:1581px;height:204.5px;background:#fdfdfe;border:1px solid #d9dffb;border-top:1px solid #dcdde4;border-radius:0 0 4px 4px"></div>
<!-- GRID -->
<div class="abs " style="left:321px;top:660.5px;width:1547px;height:42.5px;background:#f8f9fb;border:1px solid #d9dce4"></div>
<span class="t" style="top:673.15px;font-size:11.56px;left:1544.50px;color:#212126;transform:scaleX(1.079);transform-origin:0 50%;-webkit-text-stroke:0.2px;">View</span>
<div class="abs " style="left:1577px;top:695px;width:225px;height:1px;background:#dcdde3"></div>
<svg class="abs" style="left:1586.2px;top:674.7px;" width="13.8" height="10.8" viewBox="0 0 13.8 10.8" ><path d="M0.5 5.4 C2.6 1.7 4.9 0.6 6.9 0.6 C8.9 0.6 11.2 1.7 13.3 5.4 C11.2 9.1 8.9 10.2 6.9 10.2 C4.9 10.2 2.6 9.1 0.5 5.4 Z" fill="none" stroke="#2a2a30" stroke-width="0.95"/><circle cx="6.9" cy="5.4" r="2.7" fill="none" stroke="#2a2a30" stroke-width="0.95"/></svg>
<span class="t" style="top:673.15px;font-size:11.56px;left:1603.50px;color:#212126;transform:scaleX(1.037);transform-origin:0 50%;-webkit-text-stroke:0.2px;">Default</span>
<svg class="abs" style="left:1786.9px;top:678.3px;" width="8.2" height="5.8" viewBox="0 0 8.2 5.8" fill="#1b1b1f"><path d="M0 0 H8.2 L4.1 5.8 Z"/></svg>
<div class="abs btn" style="left:1808px;top:667px;width:53px;height:29px;"></div>
<svg class="abs" style="left:1817.6px;top:674px;" width="10" height="13.4" viewBox="0 0 10 13.4" ><path d="M2.4 6 V3.8 Q2.4 1 5 1 Q7.6 1 7.6 3.8 V6" fill="none" stroke="#2f31c0" stroke-width="1.7"/><rect x="0.4" y="5.8" width="9.2" height="7.4" rx="1.2" fill="#2f31c0"/><circle cx="5" cy="9.4" r="1.2" fill="#e6ebfc"/></svg>
<svg class="abs" style="left:1844.2px;top:678.2px;" width="8" height="5.6" viewBox="0 0 8 5.6" fill="#2f31c0"><path d="M0 0 H8 L4 5.6 Z"/></svg>
<div class="abs " style="left:321px;top:703px;width:1547px;height:120px;background:#fff;border:1px solid #dfe1e8;border-top:1px solid #d9dce4;border-bottom:0;border-radius:5px 5px 0 0"></div>
<div class="abs " style="left:328px;top:714.5px;width:12px;height:14px;background:#fff;border:1px solid #cfcfd4;border-radius:3px"></div>
<span class="t" style="top:713.27px;font-size:10.64px;left:385.50px;color:#55565c;transform:scaleX(1.041);transform-origin:0 50%;-webkit-text-stroke:0.2px;">Asset type</span>
<svg class="abs" style="left:448.5px;top:715.3px;" width="2.2" height="11.2" viewBox="0 0 2.2 11.2" fill="#4a4b50"><rect x="0" y="0" width="2.2" height="2.2" rx=".5"/><rect x="0" y="4.5" width="2.2" height="2.2" rx=".5"/><rect x="0" y="9" width="2.2" height="2.2" rx=".5"/></svg>
<div class="abs fin" style="left:386px;top:741px;width:152px;height:29px;"></div>
<div class="abs " style="left:513px;top:742px;width:24px;height:27px;background:#e8ecfc;border-radius:0 3px 3px 0"></div>
<svg class="abs" style="left:522.1px;top:752.4px;" width="6.6" height="4.8" viewBox="0 0 6.6 4.8" fill="#3f46d2"><path d="M0 0 H6.6 L3.3 4.8 Z"/></svg>
<div class="abs fbt" style="left:541.2px;top:741px;width:28px;height:29px;"></div>
<svg class="abs" style="left:549px;top:749px;" width="12.4" height="12" viewBox="0 0 12.4 12" fill="#3f46d2"><path d="M0.4 0.6 H12 L7.4 6.2 V11.4 L5 9.6 V6.2 Z"/></svg>
<span class="t" style="top:713.27px;font-size:10.64px;left:580.50px;color:#55565c;transform:scaleX(1.057);transform-origin:0 50%;-webkit-text-stroke:0.2px;">Name</span>
<svg class="abs" style="left:621.5px;top:715.3px;" width="2.2" height="11.2" viewBox="0 0 2.2 11.2" fill="#4a4b50"><rect x="0" y="0" width="2.2" height="2.2" rx=".5"/><rect x="0" y="4.5" width="2.2" height="2.2" rx=".5"/><rect x="0" y="9" width="2.2" height="2.2" rx=".5"/></svg>
<div class="abs fin" style="left:581px;top:741px;width:156px;height:29px;"></div>
<div class="abs fbt" style="left:740.2px;top:741px;width:28px;height:29px;"></div>
<svg class="abs" style="left:748px;top:749px;" width="12.4" height="12" viewBox="0 0 12.4 12" fill="#3f46d2"><path d="M0.4 0.6 H12 L7.4 6.2 V11.4 L5 9.6 V6.2 Z"/></svg>
<span class="t" style="top:713.27px;font-size:10.64px;left:780.00px;color:#55565c;transform:scaleX(1.034);transform-origin:0 50%;-webkit-text-stroke:0.2px;">Serial number</span>
<svg class="abs" style="left:859.4px;top:715.3px;" width="2.2" height="11.2" viewBox="0 0 2.2 11.2" fill="#4a4b50"><rect x="0" y="0" width="2.2" height="2.2" rx=".5"/><rect x="0" y="4.5" width="2.2" height="2.2" rx=".5"/><rect x="0" y="9" width="2.2" height="2.2" rx=".5"/></svg>
<div class="abs fin" style="left:780px;top:741px;width:155px;height:29px;"></div>
<div class="abs fbt" style="left:938.2px;top:741px;width:28px;height:29px;"></div>
<svg class="abs" style="left:946px;top:749px;" width="12.4" height="12" viewBox="0 0 12.4 12" fill="#3f46d2"><path d="M0.4 0.6 H12 L7.4 6.2 V11.4 L5 9.6 V6.2 Z"/></svg>
<span class="t" style="top:713.27px;font-size:10.64px;left:978.00px;color:#55565c;transform:scaleX(1.052);transform-origin:0 50%;-webkit-text-stroke:0.2px;">Model</span>
<svg class="abs" style="left:1020.4px;top:715.3px;" width="2.2" height="11.2" viewBox="0 0 2.2 11.2" fill="#4a4b50"><rect x="0" y="0" width="2.2" height="2.2" rx=".5"/><rect x="0" y="4.5" width="2.2" height="2.2" rx=".5"/><rect x="0" y="9" width="2.2" height="2.2" rx=".5"/></svg>
<div class="abs fin" style="left:978px;top:741px;width:157.3px;height:29px;"></div>
<div class="abs fbt" style="left:1138.5px;top:741px;width:28px;height:29px;"></div>
<svg class="abs" style="left:1146.3px;top:749px;" width="12.4" height="12" viewBox="0 0 12.4 12" fill="#3f46d2"><path d="M0.4 0.6 H12 L7.4 6.2 V11.4 L5 9.6 V6.2 Z"/></svg>
<span class="t" style="top:713.27px;font-size:10.64px;left:1178.50px;color:#55565c;transform:scaleX(1.066);transform-origin:0 50%;-webkit-text-stroke:0.2px;">Manufacturer</span>
<svg class="abs" style="left:1256.5px;top:715.3px;" width="2.2" height="11.2" viewBox="0 0 2.2 11.2" fill="#4a4b50"><rect x="0" y="0" width="2.2" height="2.2" rx=".5"/><rect x="0" y="4.5" width="2.2" height="2.2" rx=".5"/><rect x="0" y="9" width="2.2" height="2.2" rx=".5"/></svg>
<div class="abs fin" style="left:1179px;top:741px;width:154.7px;height:29px;"></div>
<div class="abs fbt" style="left:1336.9px;top:741px;width:28px;height:29px;"></div>
<svg class="abs" style="left:1344.7px;top:749px;" width="12.4" height="12" viewBox="0 0 12.4 12" fill="#3f46d2"><path d="M0.4 0.6 H12 L7.4 6.2 V11.4 L5 9.6 V6.2 Z"/></svg>
<span class="t" style="top:713.27px;font-size:10.64px;left:1376.50px;color:#55565c;transform:scaleX(1.047);transform-origin:0 50%;-webkit-text-stroke:0.2px;">Organizational structure</span>
<svg class="abs" style="left:1506.3px;top:715.3px;" width="2.2" height="11.2" viewBox="0 0 2.2 11.2" fill="#4a4b50"><rect x="0" y="0" width="2.2" height="2.2" rx=".5"/><rect x="0" y="4.5" width="2.2" height="2.2" rx=".5"/><rect x="0" y="9" width="2.2" height="2.2" rx=".5"/></svg>
<div class="abs fin" style="left:1377px;top:741px;width:182.7px;height:29px;"></div>
<div class="abs fbt" style="left:1562.9px;top:741px;width:28px;height:29px;"></div>
<svg class="abs" style="left:1570.7px;top:749px;" width="12.4" height="12" viewBox="0 0 12.4 12" fill="#3f46d2"><path d="M0.4 0.6 H12 L7.4 6.2 V11.4 L5 9.6 V6.2 Z"/></svg>
<span class="t" style="top:713.27px;font-size:10.64px;left:1602.50px;color:#55565c;transform:scaleX(1.047);transform-origin:0 50%;-webkit-text-stroke:0.2px;">State</span>
<svg class="abs" style="left:1639.7px;top:715.3px;" width="2.2" height="11.2" viewBox="0 0 2.2 11.2" fill="#4a4b50"><rect x="0" y="0" width="2.2" height="2.2" rx=".5"/><rect x="0" y="4.5" width="2.2" height="2.2" rx=".5"/><rect x="0" y="9" width="2.2" height="2.2" rx=".5"/></svg>
<div class="abs fin" style="left:1603px;top:741px;width:161px;height:29px;"></div>
<div class="abs " style="left:1739px;top:742px;width:24px;height:27px;background:#e8ecfc;border-radius:0 3px 3px 0"></div>
<svg class="abs" style="left:1748.1px;top:752.4px;" width="6.6" height="4.8" viewBox="0 0 6.6 4.8" fill="#3f46d2"><path d="M0 0 H6.6 L3.3 4.8 Z"/></svg>
<div class="abs fbt" style="left:1767.2px;top:741px;width:28px;height:29px;"></div>
<svg class="abs" style="left:1775px;top:749px;" width="12.4" height="12" viewBox="0 0 12.4 12" fill="#3f46d2"><path d="M0.4 0.6 H12 L7.4 6.2 V11.4 L5 9.6 V6.2 Z"/></svg>
<svg class="abs" style="left:1807px;top:709px;" width="14" height="18" viewBox="0 0 14 18" ><path d="M1.4 0 H8.6 L14 5.4 V16.6 Q14 18 12.6 18 H1.4 Q0 18 0 16.6 V1.4 Q0 0 1.4 0 Z" fill="#449f6d"/><path d="M8.6 0 V5.4 H14 Z" fill="#fff"/><text x="7" y="16.2" font-family="Liberation Sans,sans-serif" font-size="10.4" font-weight="bold" fill="#fff" text-anchor="middle">X</text></svg>
<svg class="abs" style="left:1827px;top:709px;" width="14" height="18" viewBox="0 0 14 18" ><path d="M1.4 0 H8.6 L14 5.4 V16.6 Q14 18 12.6 18 H1.4 Q0 18 0 16.6 V1.4 Q0 0 1.4 0 Z" fill="#e55a6b"/><path d="M8.6 0 V5.4 H14 Z" fill="#fff"/><text x="1.2" y="13.6" font-family="Liberation Sans,sans-serif" font-size="7.4" font-weight="bold" fill="#fff" textLength="11.6" lengthAdjust="spacingAndGlyphs">PDF</text></svg>
<div class="abs " style="left:978px;top:775px;width:234px;height:47.5px;background:#fff;border:1px solid #d6d9e2"></div>
<span class="t" style="top:791.15px;font-size:11.56px;left:1039.00px;color:#212126;transform:scaleX(1.022);transform-origin:0 50%;-webkit-text-stroke:0.2px;">No records available.</span>
<div class="abs " style="left:321px;top:822px;width:1547px;height:41.5px;background:#f8f9fc;border:1px solid #dfe1e8;border-bottom:0;border-radius:0 0 5px 5px"></div>
<div class="abs " style="left:322px;top:863px;width:1545px;height:1.6px;background:#cfd3f6"></div>
<svg class="abs" style="left:338.6px;top:838.6px;" width="7" height="8" viewBox="0 0 7 8" ><path d="M0.6 0.4 V7.6" stroke="#55565c" stroke-width="1.2"/><path d="M7 0.4 L2 4 L7 7.6 Z" fill="#55565c"/></svg>
<svg class="abs" style="left:367.2px;top:838.8px;" width="5.6" height="7.6" viewBox="0 0 5.6 7.6" ><path d="M5.6 0 L0.4 3.8 L5.6 7.6 Z" fill="#55565c"/></svg>
<div class="abs " style="left:384px;top:829px;width:28px;height:28px;background:#c8caf1"></div>
<span class="t" style="top:833.85px;font-size:11.56px;left:394.79px;color:#2f31c0;-webkit-text-stroke:0.2px;">0</span>
<svg class="abs" style="left:423.6px;top:838.8px;" width="5.6" height="7.6" viewBox="0 0 5.6 7.6" ><path d="M0 0 L5.2 3.8 L0 7.6 Z" fill="#55565c"/></svg>
<svg class="abs" style="left:450px;top:838.6px;" width="7" height="8" viewBox="0 0 7 8" ><path d="M6.4 0.4 V7.6" stroke="#55565c" stroke-width="1.2"/><path d="M0 0.4 L5 4 L0 7.6 Z" fill="#55565c"/></svg>
<span class="t" style="top:833.85px;font-size:11.56px;left:479.50px;color:#212126;transform:scaleX(1.015);transform-origin:0 50%;-webkit-text-stroke:0.2px;">Page</span>
<div class="abs " style="left:513.5px;top:829.3px;width:57px;height:27px;background:#f6f7fc;border:1px solid #e6eafa;border-radius:4px"></div>
<span class="t" style="top:833.85px;font-size:11.56px;left:523.00px;color:#8a8b92;-webkit-text-stroke:0.2px;">0</span>
<span class="t" style="top:833.85px;font-size:11.56px;left:577.40px;color:#212126;transform:scaleX(1.022);transform-origin:0 50%;-webkit-text-stroke:0.2px;">of 0</span>
<svg class="abs" style="left:1841.5px;top:836px;" width="13.4" height="14.8" viewBox="0 0 13.4 14.8" ><path d="M6.2 2.4 A5.4 5.4 0 1 0 11.6 6.6" fill="none" stroke="#1b1b1f" stroke-width="1.5"/><path d="M5.8 0 L9.6 2.6 L5.8 5.2 Z" fill="#1b1b1f"/></svg>
<!-- GREEN HIGHLIGHT -->
<div class="abs " style="left:290.4px;top:502px;width:151.6px;height:58px;border-radius:3px;box-shadow:inset 0 4px 4px -1px rgba(90,90,100,.42), inset -4px 0 4px -1px rgba(80,80,90,.52), inset 3px 0 4px -1px rgba(90,90,100,.24), inset 0 -3px 4px -1px rgba(90,90,100,.24)"></div>
<div class="abs " style="left:286.7px;top:498.2px;width:159px;height:65.5px;border:4.2px solid #8fd249;border-radius:9px;box-shadow:1px 2px 4px rgba(0,0,0,.22)"></div>
<!-- ARROW ANNOTATION -->
<svg class="abs" style="left:395px;top:575px;" width="95" height="105" viewBox="0 0 95 105" ><defs><filter id="ash" x="-30%" y="-30%" width="160%" height="160%"><feGaussianBlur stdDeviation="1.6"/></filter></defs><polygon points="10.8,13.1 36.2,26.2 31.5,28.6 77.3,97.4 20.4,35.5 17.8,40.5" fill="rgba(40,40,40,.45)" filter="url(#ash)"/><polygon points="12.8,11.1 38.2,24.2 33.5,26.6 79.3,95.4 22.4,33.5 19.8,38.5" fill="#90d147"/></svg>
</body>
</html>
